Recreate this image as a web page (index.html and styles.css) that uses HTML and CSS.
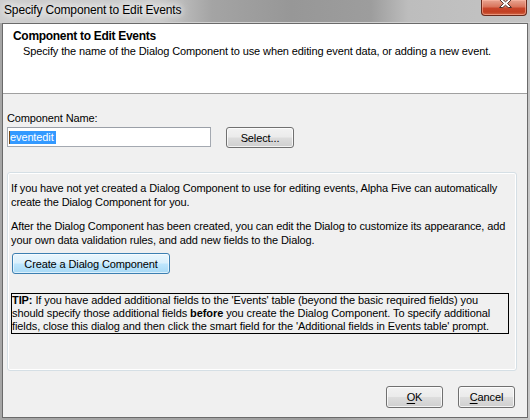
FILE: index.html
```html
<!DOCTYPE html>
<html>
<head>
<meta charset="utf-8">
<link rel="stylesheet" href="styles.css">
</head>
<body>
<div class="window">
  <div class="titlebar">
    <span class="title">Specify Component to Edit Events</span>
    <div class="close">
      <svg width="46" height="16" viewBox="0 0 46 16">
        <path d="M18.5 0.5 H21.8 L24.5 2.8 L27.2 0.5 H30.5 L26.6 4.5 L30.5 8.5 H27.2 L24.5 6.2 L21.8 8.5 H18.5 L22.4 4.5 Z" fill="#ffffff" stroke="#4b2f2a" stroke-width="1" stroke-linejoin="round"/>
      </svg>
    </div>
  </div>
  <div class="client">
    <div class="header">
      <div class="h-title">Component to Edit Events</div>
      <div class="h-sub">Specify the name of the Dialog Component to use when editing event data, or adding a new event.</div>
    </div>
    <div class="body">
      <div class="label">Component Name:</div>
      <div class="name-row">
        <div class="textbox"><span class="caret"></span><span class="selected">eventedit</span></div>
        <button class="btn select">Select...</button>
      </div>
      <div class="group">
        <p>If you have not yet created a Dialog Component to use for editing events, Alpha Five can automatically<br>create the Dialog Component for you.</p>
        <p class="last">After the Dialog Component has been created, you can edit the Dialog to customize its appearance, add<br>your own data validation rules, and add new fields to the Dialog.</p>
        <button class="btn btn-default create">Create a Dialog Component</button>
        <div class="tip"><b>TIP:</b> If you have added additional fields to the 'Events' table (beyond the basic required fields) you<br>should specify those additional fields <b>before</b> you create the Dialog Component. To specify additional<br>fields, close this dialog and then click the smart field for the 'Additional fields in Events table' prompt.</div>
      </div>
      <div class="footer">
        <button class="btn foot"><u>O</u>K</button>
        <button class="btn foot"><u>C</u>ancel</button>
      </div>
    </div>
  </div>
</div>
</body>
</html>
```

FILE: styles.css
```css
html, body {
  margin: 0;
  padding: 0;
}
body {
  width: 530px;
  height: 420px;
  overflow: hidden;
  font-family: "Liberation Sans", Arial, sans-serif;
  font-size: 11px;
  color: #000;
}
.window {
  width: 530px;
  height: 420px;
  box-sizing: border-box;
  display: flex;
  flex-direction: column;
  background: linear-gradient(90deg, #a6a6a6 0%, #a4a4a4 40%, #9c9c9c 60%, #c2c2c2 80%, #c6c6c6 100%);
}
.titlebar {
  height: 23px;
  flex: none;
  display: flex;
  align-items: flex-start;
  background: linear-gradient(90deg, #cdcdcd 0%, #cacaca 30%, #a4a4a4 40%, #979797 55%, #9d9d9d 70%, #bdbdbd 77%, #c4c4c4 100%);
  box-shadow: inset 0 -1px 0 #d0d0d0;
}
.title {
  padding-left: 4px;
  line-height: 21px;
  font-size: 12px;
  letter-spacing: -0.15px;
  white-space: nowrap;
  color: #000;
  text-shadow: 0 0 6px #ffffff, 0 0 10px #f4f4f4, 0 0 14px #eeeeee;
}
.close {
  margin-left: auto;
  margin-right: 3px;
  width: 46px;
  height: 16px;
  box-sizing: border-box;
  border: 1px solid #6a2a1c;
  border-top: none;
  border-radius: 0 0 4px 4px;
  background: linear-gradient(#e8a592 0%, #d9755c 45%, #c8452a 55%, #c23f22 80%, #d26a4a 100%);
  box-shadow: inset 0 0 0 1px rgba(255, 190, 170, 0.55);
}
.close svg {
  display: block;
  margin: -1px 0 0 -1px;
}
.client {
  flex: 1;
  margin: 0 2px 2px 2px;
  border: 1px solid #6a6a6a;
  display: flex;
  flex-direction: column;
  min-height: 0;
}
.header {
  height: 64px;
  flex: none;
  background: #ffffff;
  border-bottom: 1px solid #a0a0a0;
  padding: 5px 0 0 10px;
}
.h-title {
  font-weight: bold;
  font-size: 12px;
  letter-spacing: -0.3px;
  line-height: 15px;
  white-space: nowrap;
}
.h-sub {
  padding-left: 10px;
  line-height: 15px;
  letter-spacing: -0.12px;
  white-space: nowrap;
}
.body {
  flex: 1;
  background: #f0f0f0;
  padding: 17px 0 0 4px;
  display: flex;
  flex-direction: column;
  align-items: flex-start;
}
.label {
  line-height: 14px;
  letter-spacing: -0.12px;
  white-space: nowrap;
}
.name-row {
  margin-top: 2px;
  display: flex;
  align-items: flex-start;
  gap: 15px;
}
.textbox {
  width: 204px;
  height: 20px;
  box-sizing: border-box;
  border: 1px solid #a4a9b1;
  border-top-color: #9a9fa7;
  background: #ffffff;
  display: flex;
  align-items: center;
  padding-left: 1px;
}
.caret {
  display: inline-block;
  width: 1px;
  height: 13px;
  background: #7a4a14;
}
.selected {
  display: inline-block;
  background: #3399ff;
  color: #ffffff;
  line-height: 13px;
  height: 13px;
  padding: 0 2px 0 0;
  letter-spacing: -0.12px;
  white-space: nowrap;
}
.btn {
  font-family: "Liberation Sans", Arial, sans-serif;
  font-size: 11px;
  letter-spacing: -0.12px;
  color: #000;
  box-sizing: border-box;
  border: 1px solid #707070;
  border-radius: 3px;
  background: linear-gradient(#f2f2f2 0%, #ebebeb 48%, #dddddd 52%, #cfcfcf 100%);
  box-shadow: inset 0 0 0 1px rgba(255, 255, 255, 0.75);
  padding: 0;
  margin: 0;
  white-space: nowrap;
}
.btn u {
  text-decoration: underline;
  text-underline-offset: 2px;
}
.select {
  width: 68px;
  height: 21px;
}
.btn-default {
  border-color: #3c7fb1;
  background: linear-gradient(#eaf6fd 0%, #d9f0fc 48%, #bee6fd 52%, #a7d9f5 100%);
  box-shadow: inset 0 0 0 1px rgba(255, 255, 255, 0.6);
}
.group {
  margin-top: 24px;
  width: 510px;
  height: 199px;
  box-sizing: border-box;
  border: 1px solid #d5dfe5;
  border-radius: 3px;
  box-shadow: inset 0 0 0 1px #ffffff;
  padding: 8px 0 0 3px;
}
.group p {
  margin: 0 0 10px 0;
  line-height: 14px;
  letter-spacing: -0.12px;
  white-space: nowrap;
}
.group p.last {
  margin-bottom: 6px;
}
.create {
  display: block;
  margin-left: 1px;
  width: 158px;
  height: 21px;
}
.tip {
  margin-top: 19px;
  width: 498px;
  box-sizing: border-box;
  border: 1px solid #000000;
  line-height: 13px;
  letter-spacing: -0.09px;
  white-space: nowrap;
  overflow: hidden;
}
.footer {
  margin-top: 15px;
  align-self: stretch;
  display: flex;
  justify-content: flex-end;
  gap: 15px;
  padding-right: 12px;
}
.foot {
  width: 57px;
  height: 22px;
}
```
